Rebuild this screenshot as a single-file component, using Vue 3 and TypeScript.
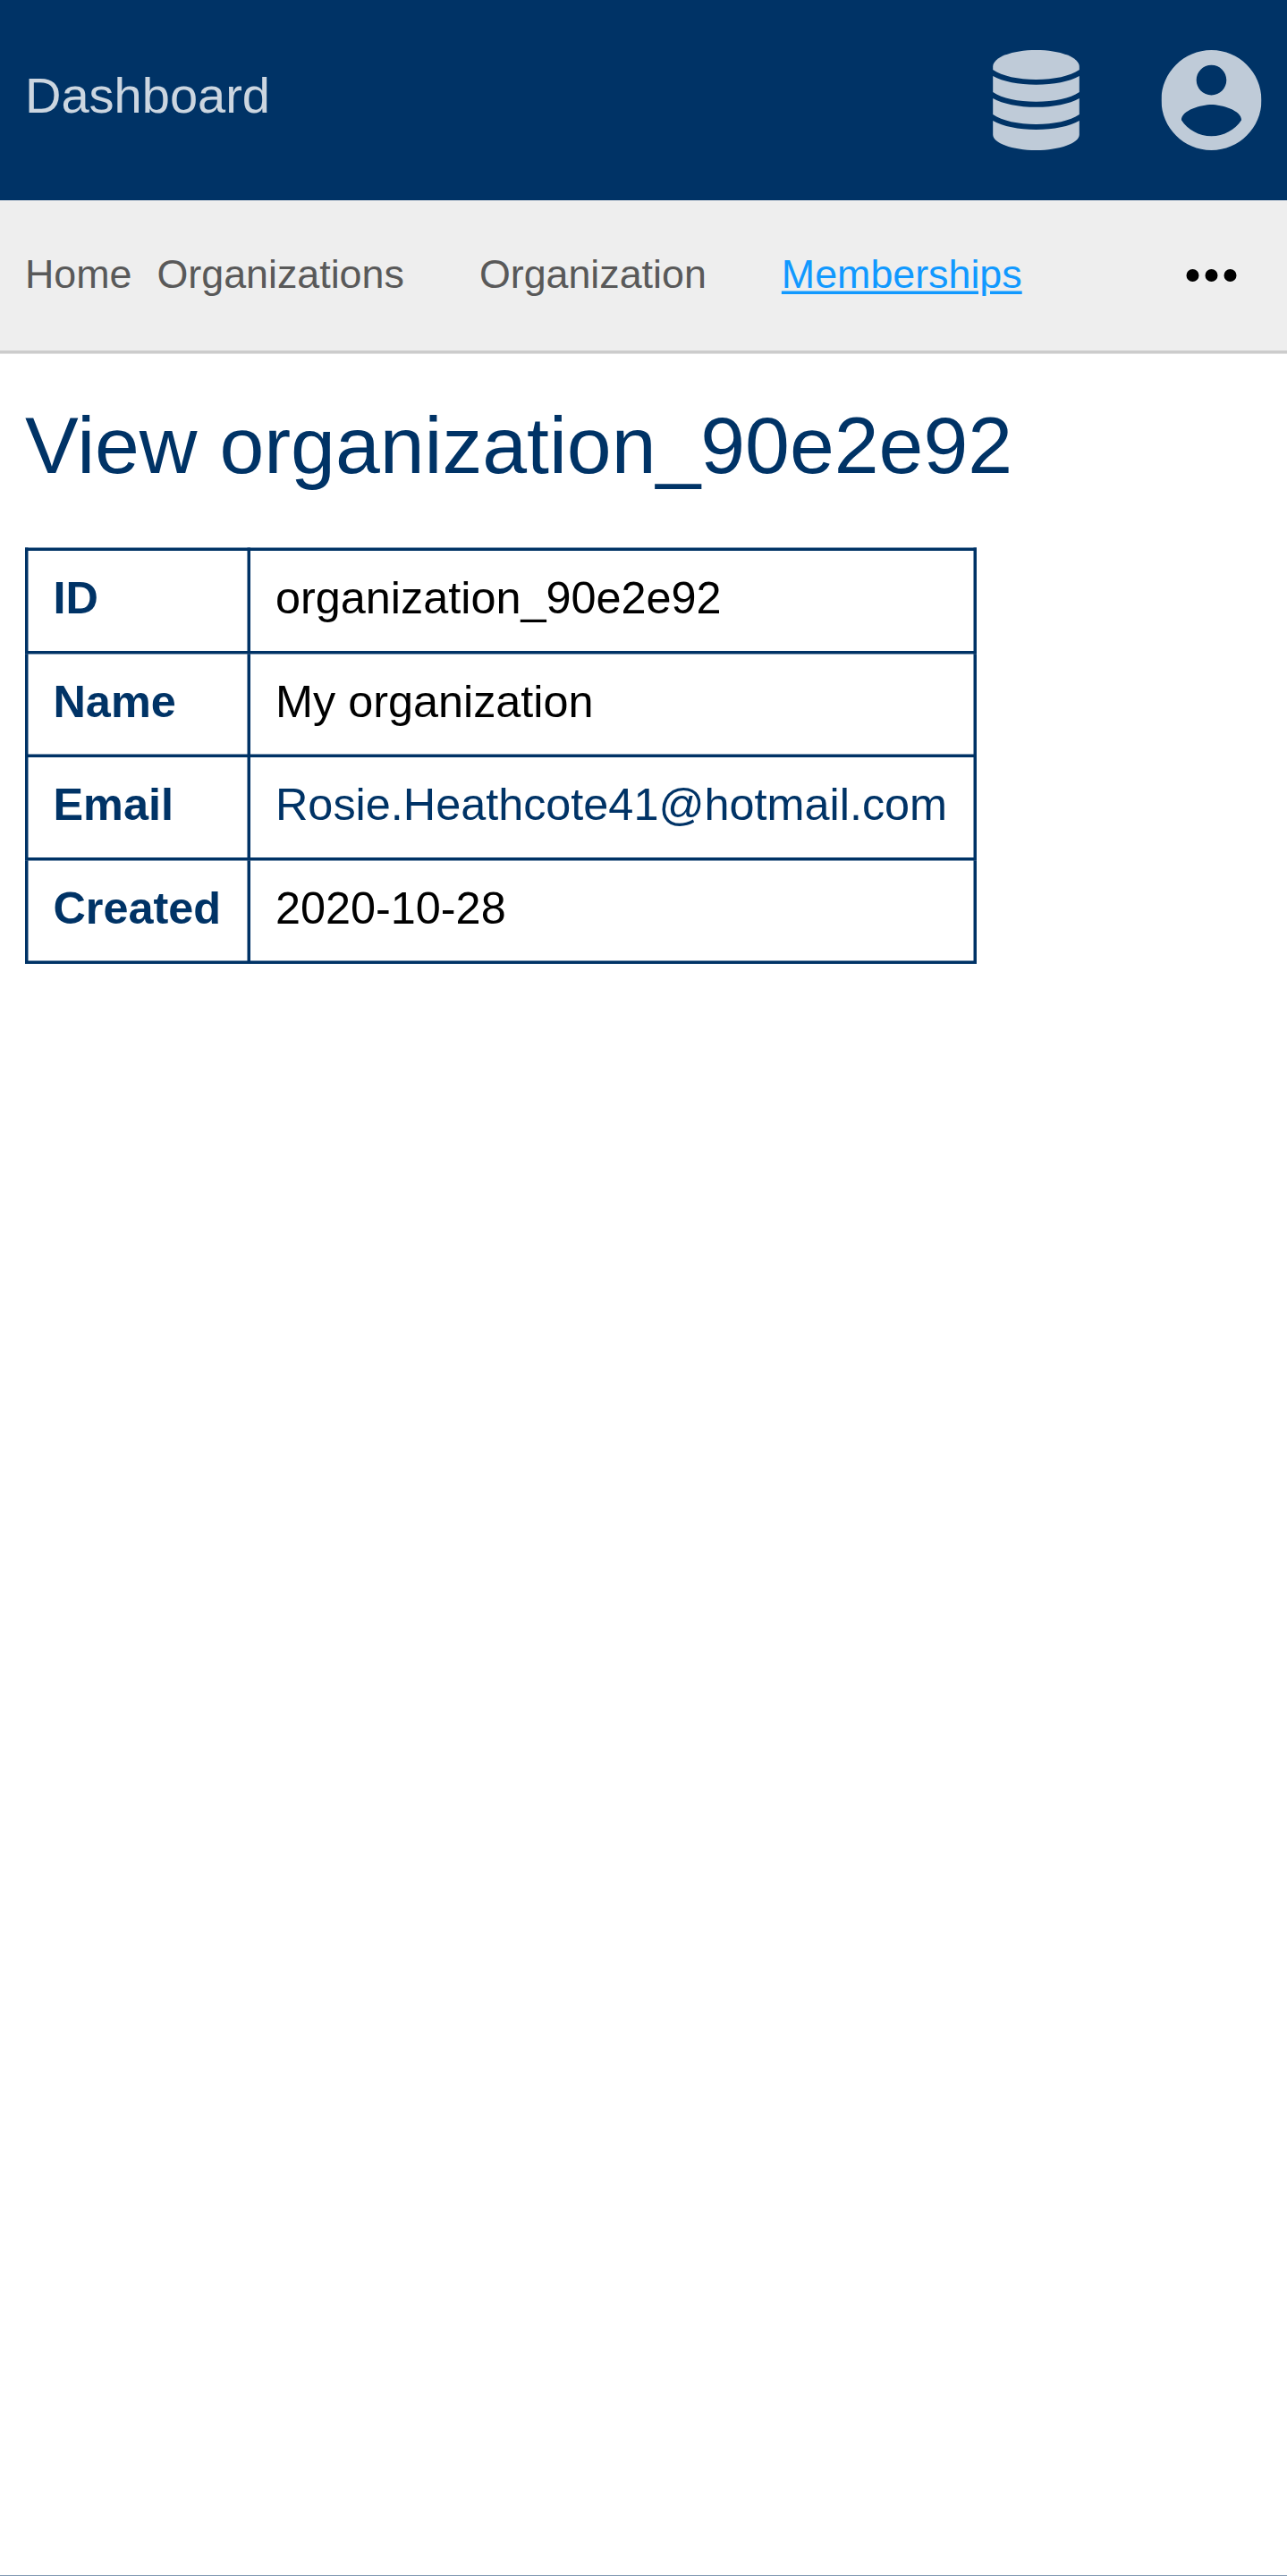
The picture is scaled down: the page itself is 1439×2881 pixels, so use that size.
<script setup lang="ts">
interface Crumb {
  label: string
  kind: 'root' | 'item' | 'link'
}

interface Row {
  label: string
  value: string
  href?: string
}

const crumbs: Crumb[] = [
  { label: 'Home', kind: 'root' },
  { label: 'Organizations', kind: 'item' },
  { label: 'Organization', kind: 'item' },
  { label: 'Memberships', kind: 'link' },
]

const rows: Row[] = [
  { label: 'ID', value: 'organization_90e2e92' },
  { label: 'Name', value: 'My organization' },
  { label: 'Email', value: 'Rosie.Heathcote41@hotmail.com', href: 'mailto:Rosie.Heathcote41@hotmail.com' },
  { label: 'Created', value: '2020-10-28' },
]
</script>

<template>
  <div class="viewport">
    <div class="app">
      <header class="topbar">
        <a class="brand">Dashboard</a>
        <div class="actions">
          <svg class="icon-db" viewBox="0 0 98 112" aria-hidden="true">
            <path d="M49 0C75.700 0 97.300 8 97.300 18.500V22C87 29 69 33 49 33S11 29 .700 22V18.500C.700 8 22.300 0 49 0Z" />
            <path d="M.700 29C12 35.300 29 38.700 49 38.700S86 35.300 97.300 29V47C87 54 69 57.800 49 57.800S11 54 .700 47Z" />
            <path d="M.700 54C12 60.300 29 63.800 49 63.800S86 60.300 97.300 54V72C87 79 69 83 49 83S11 79 .700 72Z" />
            <path d="M.700 79C12 85.300 29 89 49 89S86 85.300 97.300 79V94.500C97.300 104 75.700 112 49 112S.700 104 .700 94.500Z" />
          </svg>
          <svg class="icon-user" viewBox="2 2 20 20" aria-hidden="true">
            <path d="M12 2C6.480 2 2 6.480 2 12s4.480 10 10 10 10-4.480 10-10S17.520 2 12 2zm0 3c1.660 0 3 1.340 3 3s-1.340 3-3 3-3-1.340-3-3 1.340-3 3-3zm0 14.200c-2.500 0-4.710-1.280-6-3.220.030-1.990 4-3.080 6-3.080 1.990 0 5.970 1.090 6 3.080-1.290 1.940-3.500 3.220-6 3.220z" />
          </svg>
        </div>
      </header>
      <nav class="crumbs">
        <a v-for="c in crumbs" :key="c.label" :class="['crumb', c.kind]">{{ c.label }}</a>
        <svg class="more" viewBox="0 0 24 24" aria-hidden="true">
          <circle cx="6" cy="12" r="2" />
          <circle cx="12" cy="12" r="2" />
          <circle cx="18" cy="12" r="2" />
        </svg>
      </nav>
      <main class="content">
        <h1>View organization_90e2e92</h1>
        <table>
          <tbody>
            <tr v-for="r in rows" :key="r.label">
              <th>{{ r.label }}</th>
              <td>
                <a v-if="r.href" :href="r.href">{{ r.value }}</a>
                <template v-else>{{ r.value }}</template>
              </td>
            </tr>
          </tbody>
        </table>
      </main>
    </div>
  </div>
</template>

<style>
html,
body {
  margin: 0;
  background: #003366;
}
</style>

<style scoped>
.viewport {
  width: 1439px;
  height: 2881px;
  overflow: hidden;
}

/* Phone-sized layout, magnified to the device resolution */
.app {
  box-sizing: border-box;
  width: 412px;
  height: 822.857px;
  display: flex;
  flex-direction: column;
  transform: scale(3.5);
  transform-origin: 0 0;
  background: #fff;
  font-family: "Liberation Sans", Arial, sans-serif;
  color: #000;
}

.topbar {
  height: 64px;
  box-sizing: border-box;
  padding: 0 9px 0 8px;
  display: flex;
  align-items: center;
  justify-content: space-between;
  background: #003366;
}

.brand {
  font-size: 16px;
  line-height: 18px;
  padding-bottom: 2px;
  color: rgba(255, 255, 255, 0.8);
}

.actions {
  display: flex;
  align-items: center;
  gap: 26px;
  fill: rgba(255, 255, 255, 0.75);
}

.icon-db {
  display: block;
  width: 28px;
  height: 32px;
}

.icon-user {
  display: block;
  width: 32px;
  height: 32px;
}

.crumbs {
  height: 49px;
  box-sizing: border-box;
  padding: 0 13px 0 8px;
  display: flex;
  align-items: center;
  background: #eee;
  border-bottom: 1px solid #ccc;
}

.crumb {
  font-size: 12.8px;
  line-height: 15px;
  padding-bottom: 1px;
  margin-right: 24px;
  color: #595959;
}

.crumb.root {
  margin-right: 8px;
}

.crumb.link {
  color: #1199ff;
  text-decoration: underline;
}

.more {
  display: block;
  width: 24px;
  height: 24px;
  margin-left: auto;
}

.content {
  padding: 15px 8px;
}

h1 {
  margin: 0;
  font-size: 25.6px;
  line-height: 29px;
  font-weight: 400;
  color: #003366;
}

table {
  margin-top: 18px;
  width: 304px;
  table-layout: fixed;
  border-collapse: collapse;
  font-size: 14.4px;
  line-height: 16px;
}

th,
td {
  height: 16px;
  padding: 7px 8px 9px;
  border: 1px solid #003366;
  text-align: left;
  white-space: nowrap;
}

th {
  box-sizing: border-box;
  width: 71px;
  font-weight: 700;
  color: #003366;
}

td a {
  color: #003366;
  text-decoration: none;
}
</style>
